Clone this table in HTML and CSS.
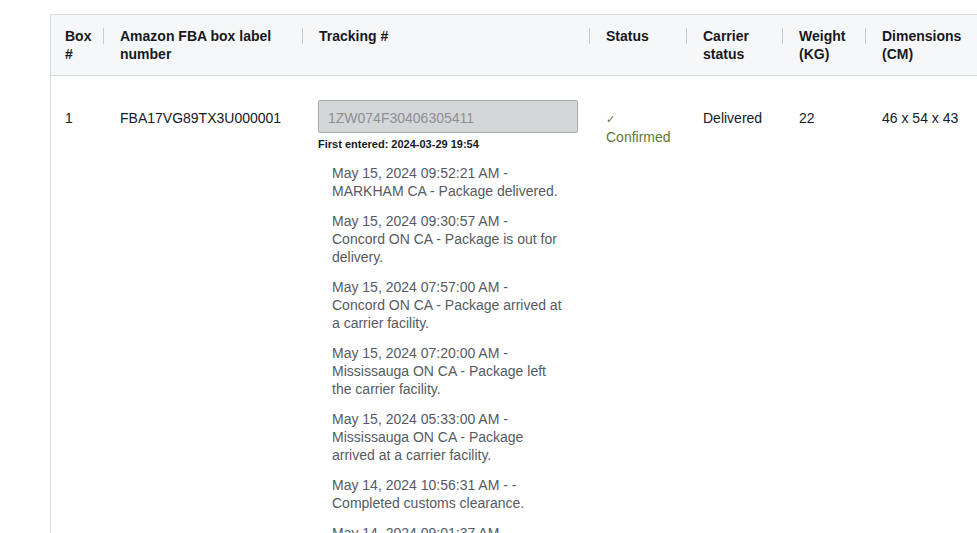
FILE: index.html
```html
<!DOCTYPE html>
<html>
<head>
<meta charset="utf-8">
<link rel="stylesheet" href="styles.css">
</head>
<body>
<div class="panel">
  <table class="grid">
    <colgroup>
      <col class="c1"><col class="c2"><col class="c3"><col class="c4"><col class="c5"><col class="c6"><col class="c7">
    </colgroup>
    <thead>
      <tr>
        <th><span class="hd">Box<br>#</span></th>
        <th class="sep"><span class="hd">Amazon FBA box label<br>number</span></th>
        <th class="sep"><span class="hd">Tracking #</span></th>
        <th class="sep"><span class="hd">Status</span></th>
        <th class="sep"><span class="hd">Carrier<br>status</span></th>
        <th class="sep"><span class="hd">Weight<br>(KG)</span></th>
        <th class="sep"><span class="hd">Dimensions<br>(CM)</span></th>
      </tr>
    </thead>
    <tbody>
      <tr>
        <td>1</td>
        <td>FBA17VG89TX3U000001</td>
        <td class="track">
          <input class="trk-input" type="text" value="1ZW074F30406305411" disabled>
          <div class="first">First entered: 2024-03-29 19:54</div>
          <ul class="events">
            <li>May 15, 2024 09:52:21 AM - MARKHAM CA - Package delivered.</li>
            <li>May 15, 2024 09:30:57 AM - Concord ON CA - Package is out for delivery.</li>
            <li>May 15, 2024 07:57:00 AM - Concord ON CA - Package arrived at a carrier facility.</li>
            <li>May 15, 2024 07:20:00 AM - Mississauga ON CA - Package left the carrier facility.</li>
            <li>May 15, 2024 05:33:00 AM - Mississauga ON CA - Package arrived at a carrier facility.</li>
            <li>May 14, 2024 10:56:31 AM - - Completed customs clearance.</li>
            <li>May 14, 2024 09:01:37 AM - Mississauga ON CA - Import scan.</li>
          </ul>
        </td>
        <td class="status"><span class="check">✓</span><br>Confirmed</td>
        <td>Delivered</td>
        <td>22</td>
        <td>46 x 54 x 43</td>
      </tr>
    </tbody>
  </table>
</div>
</body>
</html>
```
FILE: styles.css
```css
html, body {
  margin: 0;
  padding: 0;
  background: #ffffff;
  overflow: hidden;
}
body {
  font-family: "Liberation Sans", Arial, sans-serif;
  font-size: 14px;
  line-height: 18px;
  color: #16191f;
}
.panel {
  margin: 14px 0 0 50px;
  border-top: 1px solid #d5dbdb;
  border-left: 1px solid #d5dbdb;
  width: 1000px;
  height: 600px;
}
.grid {
  border-collapse: collapse;
  table-layout: fixed;
  width: 1000px;
}
.c1 { width: 53px; }
.c2 { width: 199px; }
.c3 { width: 287px; }
.c4 { width: 97px; }
.c5 { width: 96px; }
.c6 { width: 83px; }
.c7 { width: 185px; }
thead tr {
  background: #f6f7f8;
  border-bottom: 1px solid #d5dbdb;
}
th {
  text-align: left;
  vertical-align: top;
  font-weight: bold;
  padding: 12px 8px 12px 16px;
  height: 36px;
  position: relative;
}
th:first-child { padding-left: 14px; }
th.sep::before {
  content: "";
  position: absolute;
  left: -1px;
  top: 13px;
  height: 16px;
  border-left: 1px solid #c6cbcf;
}
td {
  vertical-align: baseline;
  padding: 24px 8px 0 16px;
  color: #16191f;
}
td:first-child { padding-left: 14px; }
.trk-input {
  display: block;
  box-sizing: border-box;
  width: 260px;
  height: 33px;
  margin: 0 0 0 -1px;
  padding: 2px 9px 0;
  font-family: inherit;
  font-size: 14px;
  color: #8d9096;
  background: #d5d6d8;
  border: 1px solid #a9acb0;
  border-radius: 2px;
}
.first {
  font-size: 11px;
  font-weight: bold;
  line-height: 14px;
  margin: 4px 0 0 -1px;
}
.events {
  list-style: none;
  margin: 13px 0 0 13px;
  padding: 0;
  width: 232px;
  color: #545b64;
}
.events li {
  margin-bottom: 12px;
}
.status {
  color: #5e7a32;
}
.check {
  font-size: 11px;
}
```
